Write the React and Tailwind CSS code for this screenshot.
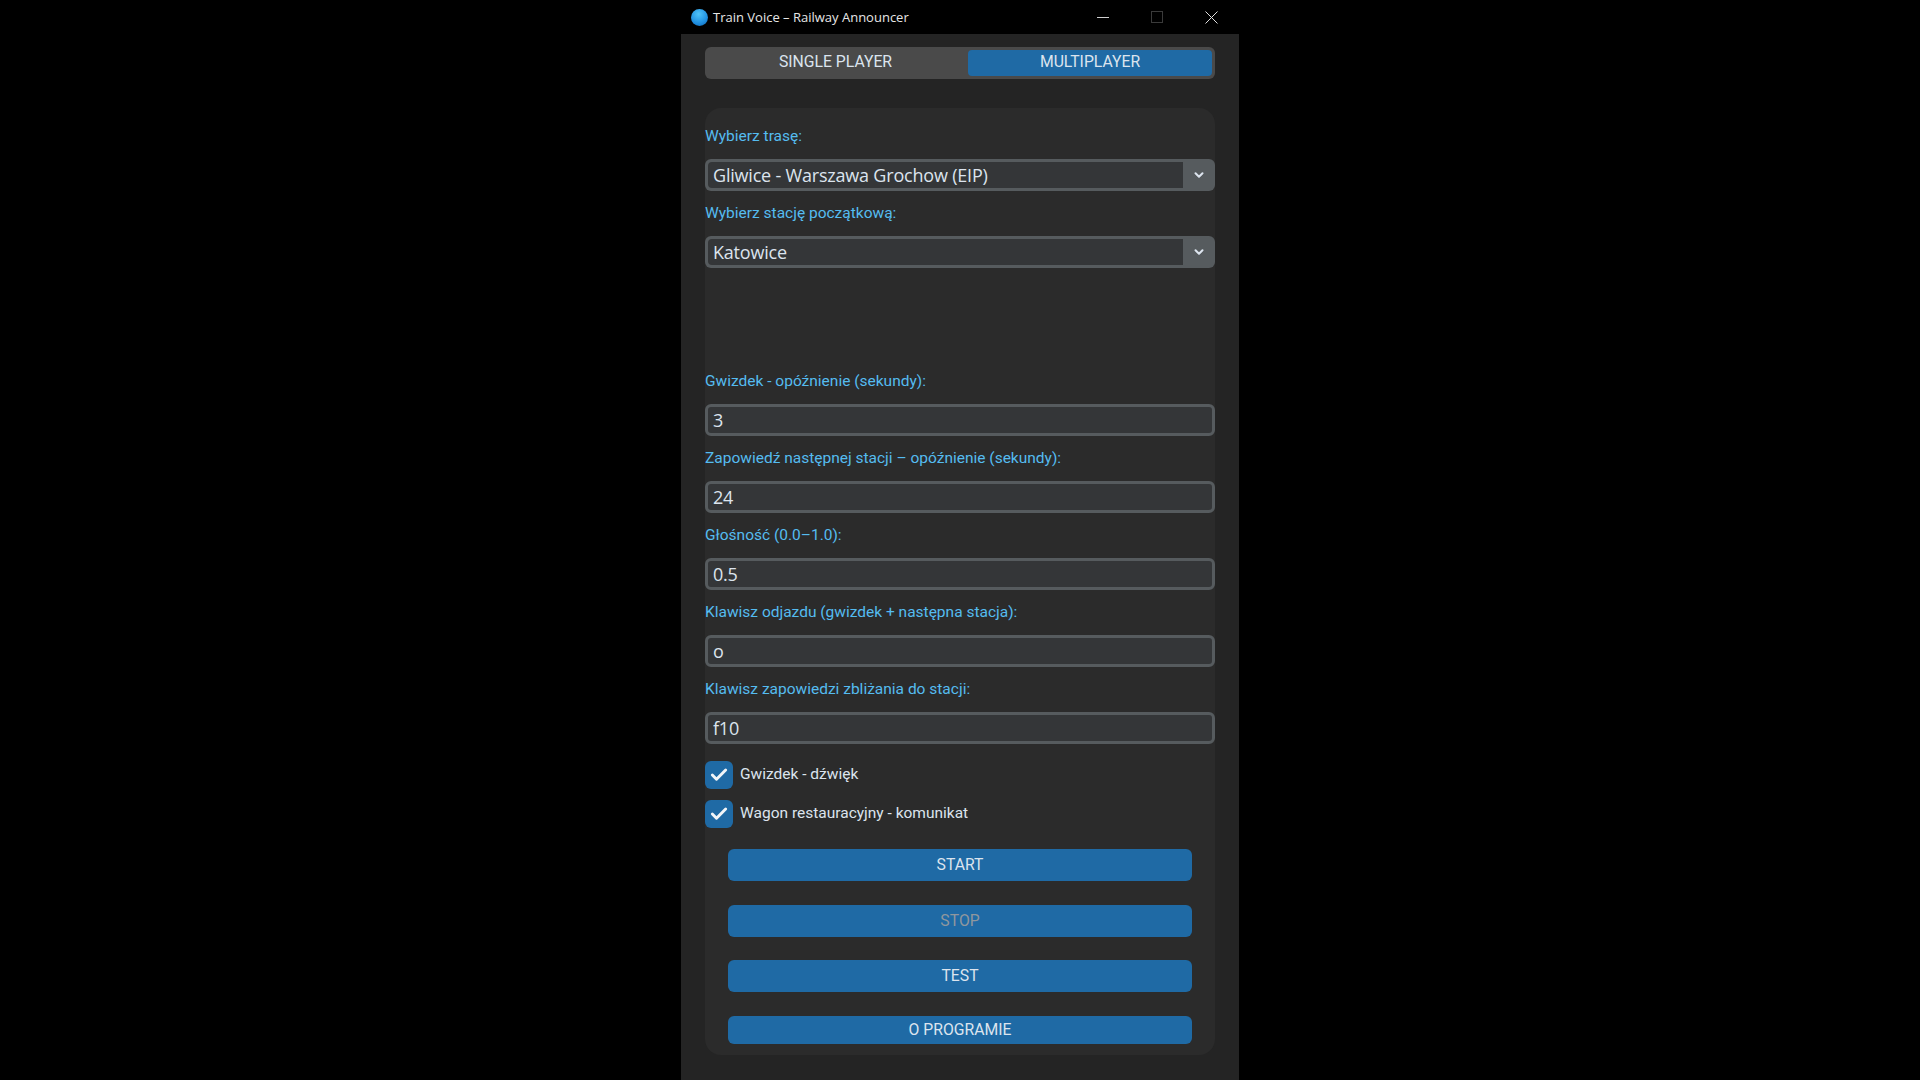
import { Check, ChevronDown } from 'lucide-react'

const uiFont = "font-['Roboto',sans-serif]"
const valueFont = "font-['Open_Sans',sans-serif]"

function Label({ children }) {
  return (
    <div className="h-7 pt-[2px] flex items-center text-[15.5px] text-[#55bcf0]">{children}</div>
  )
}

function Entry({ value }) {
  return (
    <input
      readOnly
      value={value}
      className={`block w-full h-8 mt-[9px] mb-2 pl-[5px] pb-[1px] bg-[#343638] border-[3px] border-[#565b5e] rounded-md text-[18px] tracking-[-0.2px] text-[#dce4ee] outline-none ${valueFont}`}
    />
  )
}

function Combo({ value }) {
  return (
    <div className="flex h-8 mt-[9px] mb-2 bg-[#565b5e] rounded-md overflow-hidden">
      <div className={`flex-1 flex items-center my-[3px] ml-[3px] pl-[5px] bg-[#343638] rounded-l-[4px] text-[18px] tracking-[-0.2px] text-[#dce4ee] ${valueFont}`}>
        {value}
      </div>
      <div className="w-8 flex items-center justify-center text-[#dce4ee]">
        <ChevronDown size={14} strokeWidth={3.5} />
      </div>
    </div>
  )
}

function CheckRow({ children, className }) {
  return (
    <div className={`flex items-center gap-[7px] ${className}`}>
      <div className="w-7 h-7 rounded-md bg-[#1f6aa5] flex items-center justify-center text-[#f2f5f8]">
        <Check size={20} strokeWidth={3.5} />
      </div>
      <span className="text-[15.5px] text-[#dce4ee]">{children}</span>
    </div>
  )
}

function ActionButton({ children, disabled, className }) {
  return (
    <button className={`block w-[464px] mx-auto bg-[#1f6aa5] rounded-md text-[15.75px] ${disabled ? 'text-[#8f979e]' : 'text-[#dce4ee]'} ${className}`}>
      {children}
    </button>
  )
}

export default function App() {
  return (
    <div className={`min-h-screen h-screen bg-black flex justify-center overflow-hidden ${uiFont}`}>
      <div className="w-[558px] bg-[#242424] flex flex-col">
        <div className="h-[34px] shrink-0 bg-black flex items-center pl-[9px]">
          <div className="w-[17px] h-[17px] ml-px rounded-full bg-[radial-gradient(circle_at_45%_30%,#4fc3f7,#1f8fe0_60%,#0f5fa8)]" />
          <span className={`ml-[5px] mt-[2px] text-[13px] text-[#e6e6e6] ${valueFont}`}>Train Voice – Railway Announcer</span>
          <div className="ml-auto mr-px flex items-center h-full">
            <div className="w-[54px] flex justify-center">
              <div className="w-3 h-px bg-[#cfcfcf]" />
            </div>
            <div className="w-[54px] flex justify-center">
              <div className="w-3 h-3 border border-[#3a3a3a]" />
            </div>
            <div className="w-[54px] flex justify-center text-[#e0e0e0]">
              <svg width="13" height="13" viewBox="0 0 13 13" fill="none" stroke="currentColor" strokeWidth="1">
                <path d="M0.5 0.5 L12.5 12.5 M12.5 0.5 L0.5 12.5" />
              </svg>
            </div>
          </div>
        </div>

        <div className="mx-6">
          <div className="flex h-8 mt-[13px] p-[3px] bg-[#4a4a4a] rounded-md text-[15.75px] text-[#dce4ee]">
            <div className="w-[260px] pr-[5px] pb-[2px] flex items-center justify-center">SINGLE PLAYER</div>
            <div className="flex-1 pb-[2px] flex items-center justify-center bg-[#1f6aa5] rounded-[4px]">MULTIPLAYER</div>
          </div>

          <div className="mt-[29px] h-[947px] bg-[#2b2b2b] rounded-2xl pt-[14px]">
            <Label>Wybierz trasę:</Label>
            <Combo value="Gliwice - Warszawa Grochow (EIP)" />
            <Label>Wybierz stację początkową:</Label>
            <Combo value="Katowice" />
            <div className="mt-[99px]">
              <Label>Gwizdek - opóźnienie (sekundy):</Label>
              <Entry value="3" />
              <Label>Zapowiedź następnej stacji – opóźnienie (sekundy):</Label>
              <Entry value="24" />
              <Label>Głośność (0.0–1.0):</Label>
              <Entry value="0.5" />
              <Label>Klawisz odjazdu (gwizdek + następna stacja):</Label>
              <Entry value="o" />
              <Label>Klawisz zapowiedzi zbliżania do stacji:</Label>
              <Entry value="f10" />
            </div>
            <CheckRow className="mt-[17px]">Gwizdek - dźwięk</CheckRow>
            <CheckRow className="mt-[11px]">Wagon restauracyjny - komunikat</CheckRow>
            <ActionButton className="h-8 mt-[21px]">START</ActionButton>
            <ActionButton disabled className="h-8 mt-6">STOP</ActionButton>
            <ActionButton className="h-8 mt-[23px]">TEST</ActionButton>
            <ActionButton className="h-7 mt-6">O PROGRAMIE</ActionButton>
          </div>
        </div>
      </div>
    </div>
  )
}
